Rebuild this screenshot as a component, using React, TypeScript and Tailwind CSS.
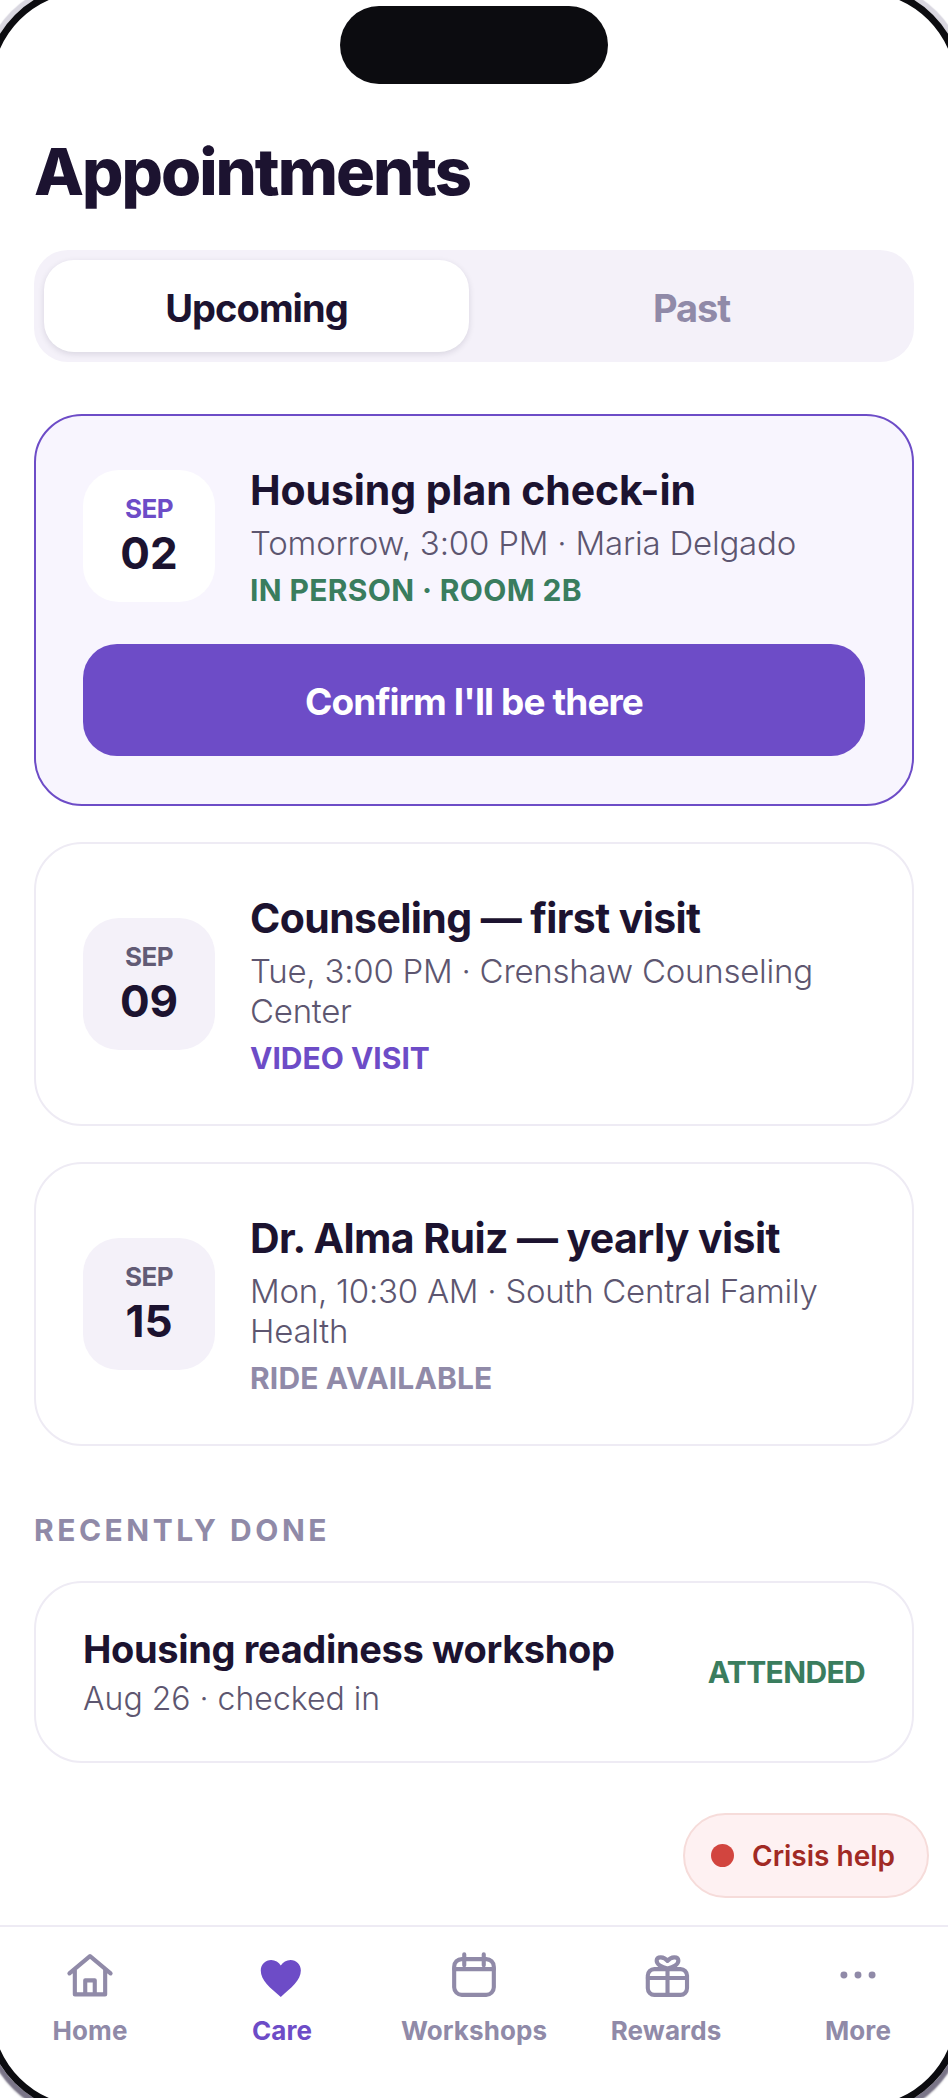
import React from "react";

const font = { fontFamily: '"Inter", "Noto Sans", sans-serif' };

function DateBox({ day, active }: { day: string; active?: boolean }) {
  return (
    <div className={"flex h-[132px] w-[132px] shrink-0 flex-col items-center justify-center rounded-[36px] " + (active ? "bg-white" : "bg-[#f4f1f9]")}>
      <span className={"text-[26px] font-bold leading-[30px] tracking-[-0.5px] " + (active ? "text-[#6d4cc7]" : "text-[#625b75]")}>SEP</span>
      <span className="mt-[3px] text-[44px] font-bold leading-[52px] text-[#1c1330]">{day}</span>
    </div>
  );
}

function Info({ title, titleClass, sub, subClass, tag, tagClass }: { title: string; titleClass: string; sub: string; subClass: string; tag: string; tagClass: string }) {
  return (
    <div className="min-w-0 flex-1">
      <div className={"text-[41px] font-bold leading-[52px] text-[#1c1330] " + titleClass}>{title}</div>
      <div className={"mt-[7px] text-[33px] font-light leading-[40px] text-[#5d5670] " + subClass}>{sub}</div>
      <div className={"mt-[9px] text-[30px] font-bold leading-[36px] " + tagClass}>{tag}</div>
    </div>
  );
}

function Nav({ label, active, children }: { label: string; active?: boolean; children: React.ReactNode }) {
  return (
    <div className="flex w-[192px] shrink-0 flex-col items-center">
      <div className="flex h-[52px] w-[52px] items-center justify-center">{children}</div>
      <span className={"mt-[14px] text-[26px] font-bold leading-[30px] tracking-[0.1px] " + (active ? "text-[#6d4cc7]" : "text-[#908aa8]")}>{label}</span>
    </div>
  );
}

const stroke = { fill: "none", stroke: "#908aa8", strokeWidth: 1.9, strokeLinecap: "round" as const, strokeLinejoin: "round" as const };

export default function App() {
  return (
    <div style={font} className="relative h-[2098px] w-[948px] overflow-hidden bg-white">
      <div className="flex h-full flex-col">
        <div className="flex justify-center pt-[6px]">
          <div className="h-[78px] w-[268px] rounded-[39px] bg-[#0c0c10]" />
        </div>
        <div className="flex-1 px-[34px]">
          <h1 className="mt-[48px] text-[65px] font-extrabold leading-[80px] tracking-[-2px] text-[#1c1330]">Appointments</h1>
          <div className="mt-[38px] flex h-[112px] items-center gap-[10px] rounded-[34px] bg-[#f4f1f9] p-[10px]">
            <div className="flex h-[92px] flex-1 items-center justify-center rounded-[30px] bg-white pt-[4px] text-[38px] font-bold tracking-[-0.95px] text-[#1c1330] shadow-[0_2px_6px_rgba(28,19,48,0.12)]">Upcoming</div>
            <div className="flex h-[92px] flex-1 items-center justify-center pt-[4px] text-[38px] font-bold tracking-[-1.1px] text-[#908aa8]">Past</div>
          </div>

          <div className="mt-[52px] rounded-[48px] border-2 border-[#6d4cc7] bg-[#f8f5fe] px-[47px] py-[48px]">
            <div className="flex items-center gap-[35px]">
              <DateBox day="02" active />
              <Info title="Housing plan check-in" titleClass="tracking-[-0.1px]" sub="Tomorrow, 3:00 PM · Maria Delgado" subClass="tracking-[-0.2px]" tag="IN PERSON · ROOM 2B" tagClass="tracking-[0.35px] text-[#3a7d5e]" />
            </div>
            <div className="mt-[36px] flex h-[112px] items-center justify-center rounded-[34px] bg-[#6d4cc7] pt-[4px] text-[37px] font-bold tracking-[-0.9px] text-white">Confirm I'll be there</div>
          </div>

          <div className="mt-[36px] flex flex-col gap-[36px]">
            <div className="rounded-[48px] border-2 border-[#eeebf4] bg-white px-[47px] py-[48px]">
              <div className="flex items-center gap-[35px]">
                <DateBox day="09" />
                <Info title="Counseling — first visit" titleClass="tracking-[-0.6px]" sub="Tue, 3:00 PM · Crenshaw Counseling Center" subClass="tracking-[-0.25px]" tag="VIDEO VISIT" tagClass="text-[#6d4cc7]" />
              </div>
            </div>
            <div className="rounded-[48px] border-2 border-[#eeebf4] bg-white px-[47px] py-[48px]">
              <div className="flex items-center gap-[35px]">
                <DateBox day="15" />
                <Info title="Dr. Alma Ruiz — yearly visit" titleClass="tracking-[-0.6px]" sub="Mon, 10:30 AM · South Central Family Health" subClass="tracking-[-0.25px]" tag="RIDE AVAILABLE" tagClass="tracking-[0.15px] text-[#908aa8]" />
              </div>
            </div>
          </div>

          <div className="mt-[66px] text-[30px] font-bold leading-[36px] tracking-[3.5px] text-[#908aa8]">RECENTLY DONE</div>
          <div className="mt-[33px] flex h-[182px] items-center justify-between rounded-[48px] border-2 border-[#eeebf4] px-[47px]">
            <div>
              <div className="text-[38px] font-bold leading-[48px] tracking-[-0.35px] text-[#1c1330]">Housing readiness workshop</div>
              <div className="mt-[5px] text-[32px] font-light leading-[42px] text-[#5d5670]">Aug 26 · checked in</div>
            </div>
            <div className="text-[30px] font-bold tracking-[-0.65px] text-[#3a7d5e]">ATTENDED</div>
          </div>
        </div>

        <div className="flex h-[173px] shrink-0 justify-center border-t-2 border-[#eeebf4] pt-[23px]">
          <Nav label="Home">
            <svg width="52" height="52" viewBox="0 0 24 24" {...stroke}>
              <path d="M2.500 10.800 12 2.800l9.500 8M5 9v11.500h14V9M9.800 20.500V14h4.400v6.500" />
            </svg>
          </Nav>
          <Nav label="Care" active>
            <svg width="52" height="52" viewBox="0 0 24 24">
              <path fill="#6d4cc7" d="M11.450 21.700C6.500 17.500 2.200 14 2.200 9.500 2.200 6.600 4.400 4.600 7 4.600c1.900 0 3.500 1 4.450 2.600 1-1.600 2.600-2.600 4.500-2.600 2.600 0 4.750 2 4.750 4.900 0 4.500-4.500 8-9.250 12.200Z" />
            </svg>
          </Nav>
          <Nav label="Workshops">
            <svg width="52" height="52" viewBox="0 0 24 24" {...stroke}>
              <rect x="2.850" y="4.200" width="18.300" height="16.500" rx="3.500" />
              <path d="M2.850 8.800h18.300M7.500 2v5M16.500 2v5" />
            </svg>
          </Nav>
          <Nav label="Rewards">
            <svg width="52" height="52" viewBox="0 0 24 24" {...stroke}>
              <rect x="3.600" y="8.800" width="18.100" height="11.900" rx="3" />
              <path d="M3.600 12.900h18.100M12.700 8.800v11.900M12.700 8.500C10 8 7.500 6.600 7.700 4.700 7.900 2.900 11 2.900 12.700 5c1.700-2.100 4.800-2.100 5-.3.200 1.900-2.300 3.300-5 3.800Z" />
            </svg>
          </Nav>
          <Nav label="More">
            <svg width="52" height="52" viewBox="0 0 24 24">
              <g fill="#908aa8"><circle cx="5.500" cy="11.500" r="1.600" /><circle cx="12" cy="11.500" r="1.600" /><circle cx="18.500" cy="11.500" r="1.600" /></g>
            </svg>
          </Nav>
        </div>
      </div>

      <div className="absolute left-[683px] top-[1813px] flex h-[85px] w-[246px] items-center gap-[18px] rounded-[43px] border-2 border-[#f6dcda] bg-[#fef1f2] pl-[26px]">
        <span className="h-[23px] w-[23px] rounded-full bg-[#d2453f]" />
        <span className="text-[28px] font-semibold tracking-[0px] text-[#a12a24]">Crisis help</span>
      </div>

      <div className="pointer-events-none absolute -bottom-[15px] -left-[15px] -right-[15px] -top-[15px] rounded-[102px] border-[7px] border-[#0c0c10] shadow-[0_5px_2px_2px_rgba(28,19,48,0.5),0_0_1px_5px_#d9d7e0]" />
    </div>
  );
}
